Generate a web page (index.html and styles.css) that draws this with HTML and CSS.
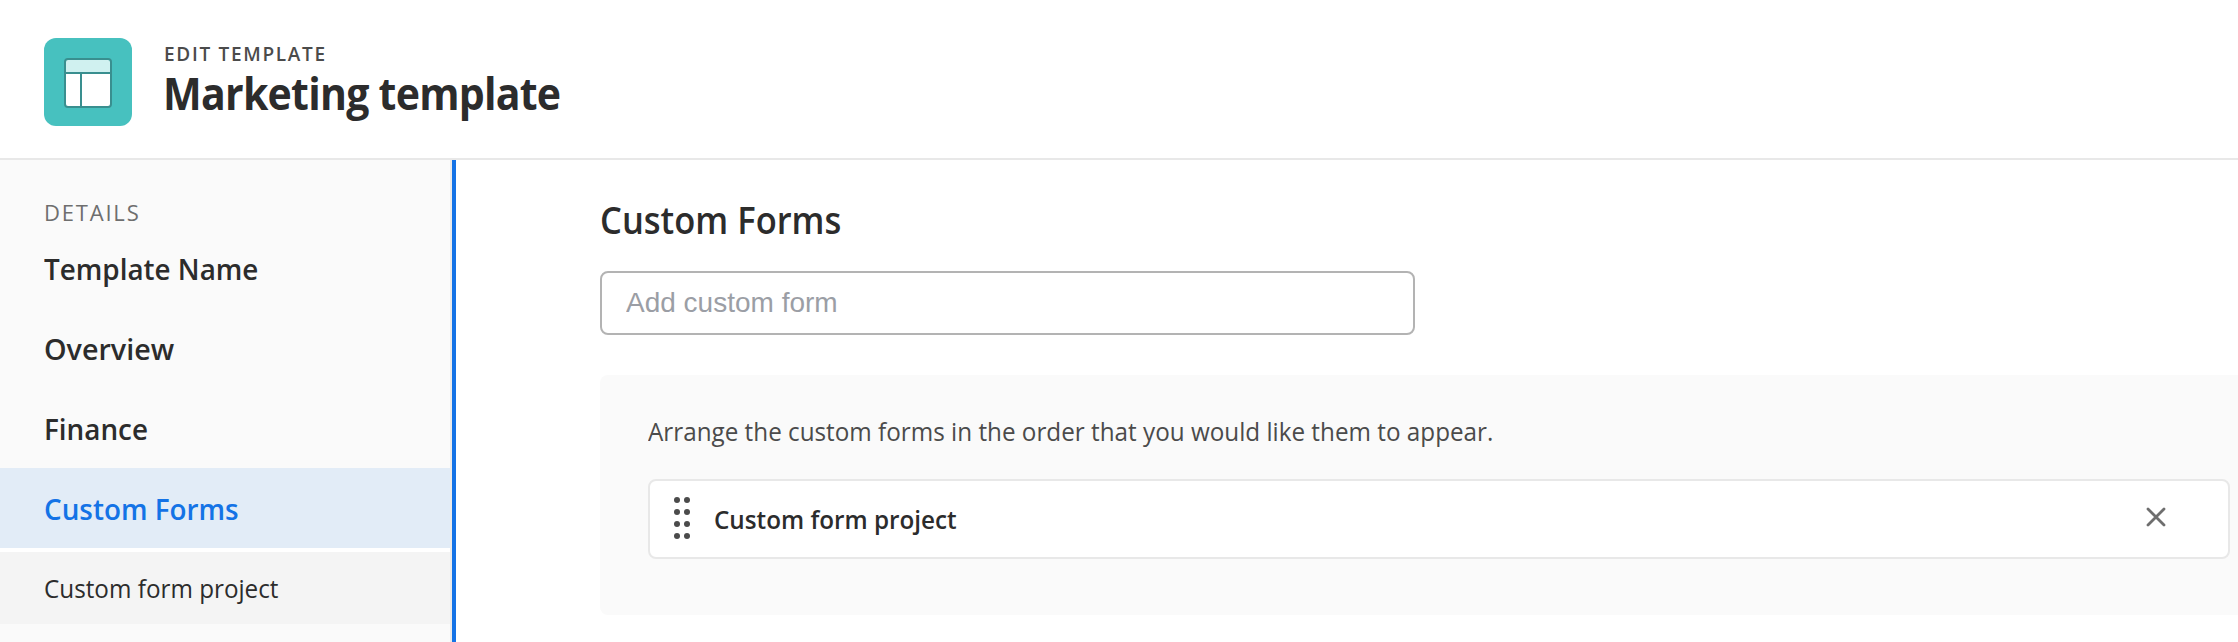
FILE: index.html
```html
<!DOCTYPE html>
<html lang="en">
<head>
<meta charset="utf-8">
<title>Edit template</title>
<link rel="stylesheet" href="styles.css">
</head>
<body>
<header class="header">
  <svg class="logo" width="88" height="88" viewBox="0 0 88 88">
    <rect width="88" height="88" rx="12" fill="#47c1bf"/>
    <rect x="21" y="21" width="46" height="48" rx="3" fill="#fff"/>
    <path d="M21 35V24a3 3 0 0 1 3-3h40a3 3 0 0 1 3 3v11z" fill="#d0f1f0"/>
    <path d="M21 35h46M37 35v34" stroke="#398f8f" stroke-width="2"/>
    <rect x="21" y="21" width="46" height="48" rx="3" fill="none" stroke="#398f8f" stroke-width="2"/>
  </svg>
  <div class="titles">
    <div class="eyebrow">EDIT TEMPLATE</div>
    <h1 class="title"><span class="narrow">Marketing template</span></h1>
  </div>
</header>
<div class="body">
  <nav class="sidebar">
    <div class="group">DETAILS</div>
    <a class="item"><span class="semi">Template Name</span></a>
    <a class="item"><span class="wide">Overview</span></a>
    <a class="item"><span class="semi">Finance</span></a>
    <a class="item active"><span class="semi">Custom Forms</span></a>
    <a class="subitem"><span class="narrow">Custom form project</span></a>
  </nav>
  <main class="main">
    <h2 class="heading"><span class="narrow">Custom Forms</span></h2>
    <input class="field" type="text" placeholder="Add custom form">
    <section class="panel">
      <p class="hint"><span class="narrow">Arrange the custom forms in the order that you would like them to appear.</span></p>
      <div class="row">
        <svg class="grip" width="16" height="42" viewBox="0 0 16 42" fill="#4b4b4b">
          <circle cx="3" cy="3" r="3"/><circle cx="13" cy="3" r="3"/>
          <circle cx="3" cy="15" r="3"/><circle cx="13" cy="15" r="3"/>
          <circle cx="3" cy="27" r="3"/><circle cx="13" cy="27" r="3"/>
          <circle cx="3" cy="39" r="3"/><circle cx="13" cy="39" r="3"/>
        </svg>
        <span class="label"><span class="narrow">Custom form project</span></span>
        <svg class="close" width="20" height="20" viewBox="0 0 20 20"><path d="M2 2l16 16M18 2L2 18" stroke="#6e6e6e" stroke-width="2.8" stroke-linecap="round"/></svg>
      </div>
    </section>
  </main>
</div>
</body>
</html>
```
FILE: styles.css
```css
* { box-sizing: border-box; }
body {
  margin: 0;
  height: 642px;
  overflow: hidden;
  display: flex;
  flex-direction: column;
  background: #fff;
  color: #2c2c2c;
  font-family: "Open Sans", "Noto Sans", sans-serif;
}
h1, h2, p { margin: 0; }
.narrow, .semi, .wide { display: inline-block; transform-origin: 0 50%; }
.narrow { transform: scaleX(0.933); }
.semi { transform: scaleX(0.96); }
.wide { transform: scaleX(0.99); }
.header {
  flex: none;
  display: flex;
  gap: 32px;
  height: 160px;
  padding: 38px 44px 0;
  border-bottom: 2px solid #e8e8e8;
}
.logo { flex: none; }
.titles { padding-top: 4px; white-space: nowrap; }
.eyebrow { font-size: 19px; line-height: 24px; font-weight: 600; letter-spacing: 1.7px; color: #4b4b4b; }
.title { margin-left: -1px; font-size: 44px; line-height: 54px; font-weight: 700; letter-spacing: -0.8px; }
.body { flex: 1; display: flex; min-height: 0; }
.sidebar {
  flex: none;
  width: 456px;
  background: #fafafa;
  border-right: 4px solid #1473e6;
  box-shadow: inset -2px 0 #eaeaea;
  padding-right: 2px;
  padding-top: 36px;
  white-space: nowrap;
}
.group { height: 32px; padding-left: 44px; font-size: 22px; line-height: 32px; letter-spacing: 1.8px; color: #6e6e6e; }
.item { display: block; height: 80px; padding-left: 44px; font-size: 29px; line-height: 82px; font-weight: 650; }
.active { background: #e2ecf7; color: #1473e6; }
.subitem {
  display: block;
  height: 76px;
  padding-left: 44px;
  border-top: 4px solid #fff;
  background: #f4f4f4;
  font-size: 26px;
  line-height: 72px;
}
.main { flex: 1; min-width: 0; padding: 35px 0 0 144px; }
.heading { height: 50px; font-size: 37px; line-height: 50px; font-weight: 650; margin-bottom: 26px; }
.field {
  display: block;
  width: 815px;
  height: 64px;
  padding: 0 24px;
  border: 2px solid #b3b3b3;
  border-radius: 8px;
  background: #fff;
  font: 28px "Liberation Sans", sans-serif;
}
.field::placeholder { color: #9b9ea5; opacity: 1; }
.panel { height: 240px; margin-top: 40px; padding: 36px 8px 0 48px; border-radius: 8px 0 0 8px; background: #fafafa; }
.hint { height: 40px; margin-bottom: 28px; font-size: 26px; line-height: 40px; color: #4b4b4b; white-space: nowrap; }
.row {
  display: flex;
  align-items: flex-start;
  height: 80px;
  padding: 0 62px 0 24px;
  border: 2px solid #e8e8e8;
  border-radius: 8px;
  background: #fff;
}
.grip { margin-top: 16px; }
.label { flex: 1; margin-left: 24px; font-size: 26px; line-height: 76px; font-weight: 650; }
.close { margin-top: 26px; }
```
